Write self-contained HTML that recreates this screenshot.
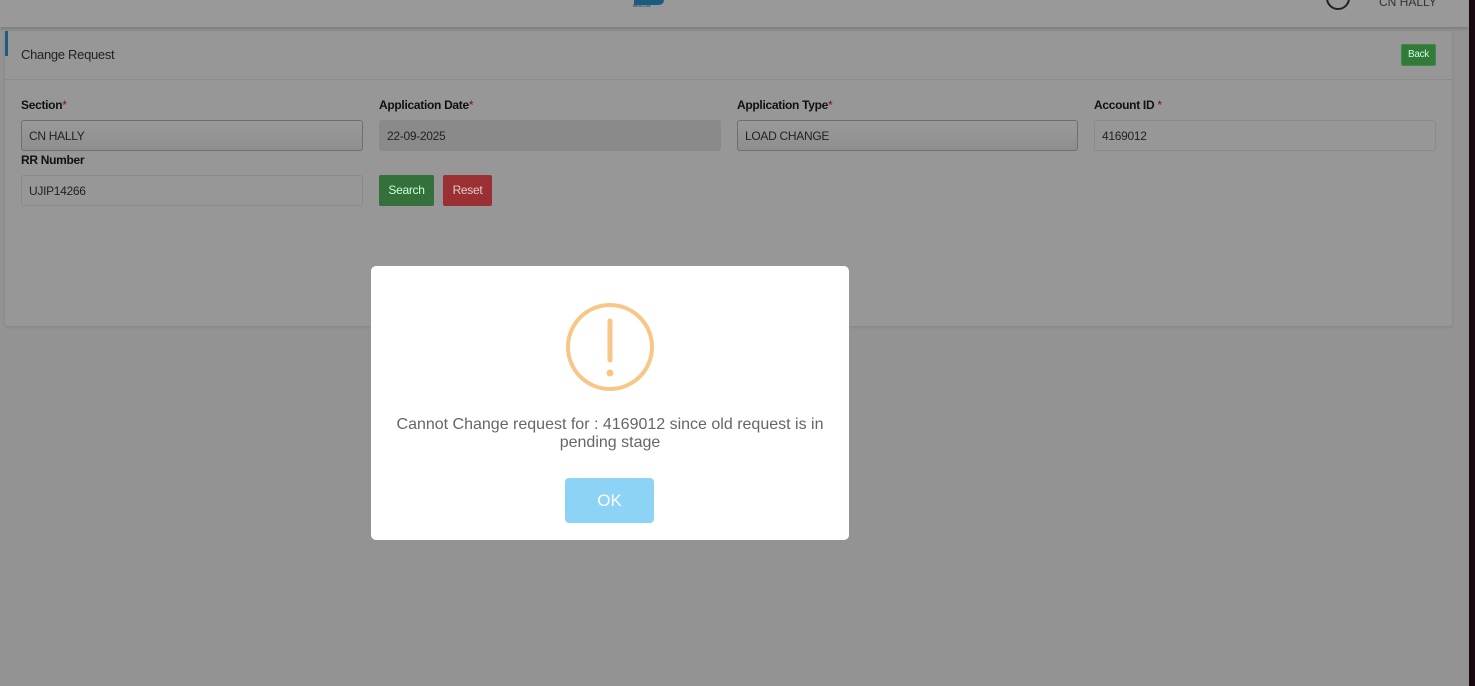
<!DOCTYPE html>
<html><head><meta charset="utf-8"><style>
*{box-sizing:border-box;margin:0;padding:0}
body{width:1475px;height:686px;overflow:hidden;background:#939393;font-family:"Liberation Sans",sans-serif;position:relative}
.a{position:absolute}
.hdr{left:0;top:0;width:1469px;height:27px;background:#999;box-shadow:0 2px 3px rgba(0,0,0,.15)}
.card{left:5px;top:31px;width:1447px;height:295px;background:#979797;border-radius:3px;box-shadow:0 1px 3px rgba(0,0,0,.1)}
.lbl{font-size:12px;color:#111;font-weight:bold;letter-spacing:-.3px}
.lbl b{color:#7a1010;font-weight:normal}
.inp{height:31px;border:1px solid #8a8a8a;border-radius:3px;font-size:12px;color:#222;padding:8px 7px;letter-spacing:-.3px}
.btn{font-size:12px;color:#cfd;border-radius:2px;text-align:center;letter-spacing:-.3px}
</style></head><body>
<div class="a hdr"></div>
<div class="a" style="left:634px;top:0;width:30px;height:5px;background:#1d5a80;border-radius:0 0 8px 0"></div>
<div class="a" style="left:633px;top:3px;font-size:4px;color:#1d5a80;font-weight:bold">BESCOM</div>
<div class="a" style="left:1326px;top:-14px;width:24px;height:24px;border:2px solid #222;border-radius:50%"></div>
<div class="a" style="left:1379px;top:-5px;font-size:12px;color:#333">CN HALLY</div>
<div class="a" style="left:1469px;top:0;width:6px;height:686px;background:#1a0810"></div>
<div class="a card"></div>
<div class="a" style="left:5px;top:31px;width:3px;height:25px;background:#1c5d80"></div>
<div class="a" style="left:21px;top:47px;font-size:13px;color:#222;letter-spacing:-.3px">Change Request</div>
<div class="a btn" style="left:1401px;top:44px;width:35px;height:22px;background:#337a3a;border:1px solid #3f8a45;line-height:20px;font-size:10px">Back</div>
<div class="a" style="left:5px;top:79px;width:1447px;height:1px;background:#8c8c8c"></div>
<div class="a lbl" style="left:21px;top:98px">Section<b>*</b></div>
<div class="a lbl" style="left:379px;top:98px">Application Date<b>*</b></div>
<div class="a lbl" style="left:737px;top:98px">Application Type<b>*</b></div>
<div class="a lbl" style="left:1094px;top:98px">Account ID <b>*</b></div>
<div class="a inp" style="left:21px;top:120px;width:342px;border-color:#6f6f6f;background:linear-gradient(#9a9a9a,#8e8e8e)">CN HALLY</div>
<div class="a inp" style="left:379px;top:120px;width:342px;background:#8a8a8b;border-color:#8a8a8b">22-09-2025</div>
<div class="a inp" style="left:737px;top:120px;width:341px;border-color:#6f6f6f;background:linear-gradient(#9a9a9a,#8e8e8e)">LOAD CHANGE</div>
<div class="a inp" style="left:1094px;top:120px;width:342px">4169012</div>
<div class="a lbl" style="left:21px;top:153px">RR Number</div>
<div class="a inp" style="left:21px;top:175px;width:342px">UJIP14266</div>
<div class="a btn" style="left:379px;top:175px;width:55px;height:31px;background:#33703a;line-height:31px">Search</div>
<div class="a btn" style="left:443px;top:175px;width:49px;height:31px;background:#9a3033;line-height:31px;color:#e8c8c8">Reset</div>
<div class="a" style="left:371px;top:266px;width:478px;height:274px;background:#fff;border-radius:5px"></div>
<svg class="a" style="left:565px;top:302px" width="90" height="90"><circle cx="45" cy="45" r="42" fill="none" stroke="#f8c687" stroke-width="4"/><line x1="45" y1="19" x2="45" y2="58" stroke="#f8c687" stroke-width="5" stroke-linecap="round"/><circle cx="45" cy="71" r="3.5" fill="#f8c687"/></svg>
<div class="a" style="left:371px;top:416px;width:478px;text-align:center;font-size:16px;color:#666;line-height:18px;padding:0 22px">Cannot Change request for : 4169012 since old request is in pending stage</div>
<div class="a" style="left:565px;top:478px;width:89px;height:45px;background:#8dd3f5;border-radius:4px;color:#fff;font-size:17px;text-align:center;line-height:45px">OK</div>
</body></html>
